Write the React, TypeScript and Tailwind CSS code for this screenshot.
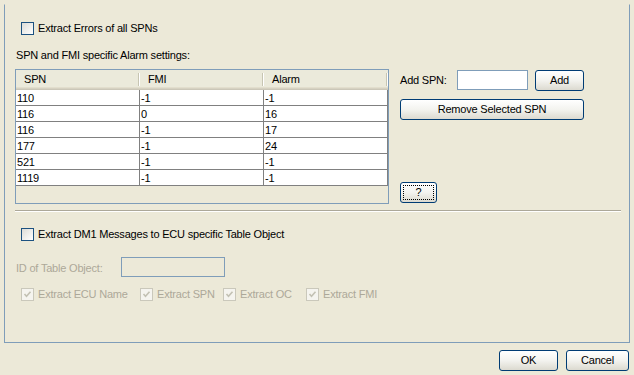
import React from "react";

const rows = [
  ["110", "-1", "-1"],
  ["116", "0", "16"],
  ["116", "-1", "17"],
  ["177", "-1", "24"],
  ["521", "-1", "-1"],
  ["1119", "-1", "-1"],
];

function CheckBox({ disabled, checked }: { disabled?: boolean; checked?: boolean }) {
  return (
    <div
      className={
        disabled
          ? "w-[13px] h-[13px] shrink-0 border border-[#cac8bb] bg-[#f5f4ef] flex items-center justify-center"
          : "w-[13px] h-[13px] shrink-0 border border-[#1c5180] bg-gradient-to-br from-[#dcdcd7] to-[#ffffff]"
      }
    >
      {checked && (
        <svg width="9" height="9" viewBox="0 0 9 9">
          <path d="M1.5 4 L3.5 6.2 L7.5 1.8" fill="none" stroke={disabled ? "#c3c1b3" : "#21a121"} strokeWidth="1.6" />
        </svg>
      )}
    </div>
  );
}

function Btn({ label, className, focus }: { label: string; className: string; focus?: boolean }) {
  return (
    <div
      className={
        "h-[21px] border border-[#003c74] rounded-[3px] bg-gradient-to-b from-[#ffffff] via-[#f3f3ef] to-[#dcdad0] flex items-center justify-center p-[2px] " +
        className
      }
    >
      <div
        className={
          "w-full h-full flex items-center justify-center leading-[13px] " +
          (focus ? "border border-dotted border-black" : "")
        }
      >
        {label}
      </div>
    </div>
  );
}

export default function App() {
  return (
    <div className="w-[634px] h-[375px] bg-[#ece9d8] flex flex-col font-['Liberation_Sans',Arial,sans-serif] text-[11px] tracking-[-0.2px] text-black leading-[13px] overflow-hidden">
      <div className="ml-[4px] mt-[4px] w-[626px] h-[339px] border border-[#7f9db9] border-t-transparent flex flex-col pl-[10px]">
        {/* checkbox 1 */}
        <div className="mt-[17px] ml-[6px] h-[13px] flex items-center gap-[4px]">
          <CheckBox />
          <span>Extract Errors of all SPNs</span>
        </div>
        <div className="mt-[14px] ml-[1px]">SPN and FMI specific Alarm settings:</div>

        {/* table + right column */}
        <div className="mt-[7px] flex">
          <div className="w-[374px] h-[135px] border border-[#7f9db9] flex flex-col">
            {/* header */}
            <div className="h-[20px] flex flex-col bg-[#ebeadb]">
              <div className="flex h-[17px]">
                {["SPN", "FMI", "Alarm"].map((h) => (
                  <div key={h} className="w-[124px] h-full flex items-center justify-between">
                    <span className="pl-[8px] pt-[1px]">{h}</span>
                    <div className="flex h-[13px] mt-[3px] self-start">
                      <div className="w-[1px] bg-[#c7c5b2]" />
                      <div className="w-[1px] bg-[#ffffff]" />
                    </div>
                  </div>
                ))}
              </div>
              <div className="h-[1px] bg-[#e2decd]" />
              <div className="h-[1px] bg-[#d6d2c2]" />
              <div className="h-[1px] bg-[#cbc7b8]" />
            </div>
            {/* rows */}
            <div className="flex flex-col">
              {rows.map((r, i) => (
                <div key={i} className="flex h-[16px] bg-white border-b border-[#808080]">
                  {r.map((c, j) => (
                    <div key={j} className="w-[124px] h-full border-r border-[#808080] pl-[1px] pt-[2px]">
                      {c}
                    </div>
                  ))}
                </div>
              ))}
            </div>
          </div>

          <div className="ml-[11px] flex flex-col h-[135px]">
            <div className="mt-[1px] flex items-start">
              <div className="w-[57px] h-[20px] flex items-center">Add SPN:</div>
              <div className="w-[71px] h-[20px] border border-[#7f9db9] bg-white" />
              <Btn label="Add" className="ml-[7px] w-[49px]" />
            </div>
            <Btn label="Remove Selected SPN" className="mt-[8px] w-[184px]" />
            <Btn label="?" className="mt-auto w-[37px] mb-[1px]" focus />
          </div>
        </div>

        {/* separator */}
        <div className="mt-[6px] w-[606px] flex flex-col">
          <div className="h-[1px] bg-[#aca899]" />
          <div className="h-[1px] bg-white" />
        </div>

        {/* checkbox 2 */}
        <div className="mt-[16px] ml-[6px] h-[13px] flex items-center gap-[4px]">
          <CheckBox />
          <span>Extract DM1 Messages to ECU specific Table Object</span>
        </div>

        {/* ID row */}
        <div className="mt-[16px] ml-[1px] flex items-center text-[#aca899]">
          <div className="w-[105px] pt-[3px]">ID of Table Object:</div>
          <div className="w-[104px] h-[20px] border border-[#7f9db9] bg-[#ece9d8]" />
        </div>

        {/* disabled checkboxes */}
        <div className="mt-[11px] ml-[6px] h-[13px] flex items-center text-[#aca899]">
          <CheckBox disabled checked />
          <span className="ml-[4px] w-[102px]">Extract ECU Name</span>
          <CheckBox disabled checked />
          <span className="ml-[4px] w-[66px]">Extract SPN</span>
          <CheckBox disabled checked />
          <span className="ml-[4px] w-[66px]">Extract OC</span>
          <CheckBox disabled checked />
          <span className="ml-[4px]">Extract FMI</span>
        </div>
      </div>

      {/* bottom buttons */}
      <div className="mt-[7px] flex justify-end pr-[5px] gap-[8px]">
        <Btn label="OK" className="w-[59px]" />
        <Btn label="Cancel" className="w-[63px]" />
      </div>
    </div>
  );
}
